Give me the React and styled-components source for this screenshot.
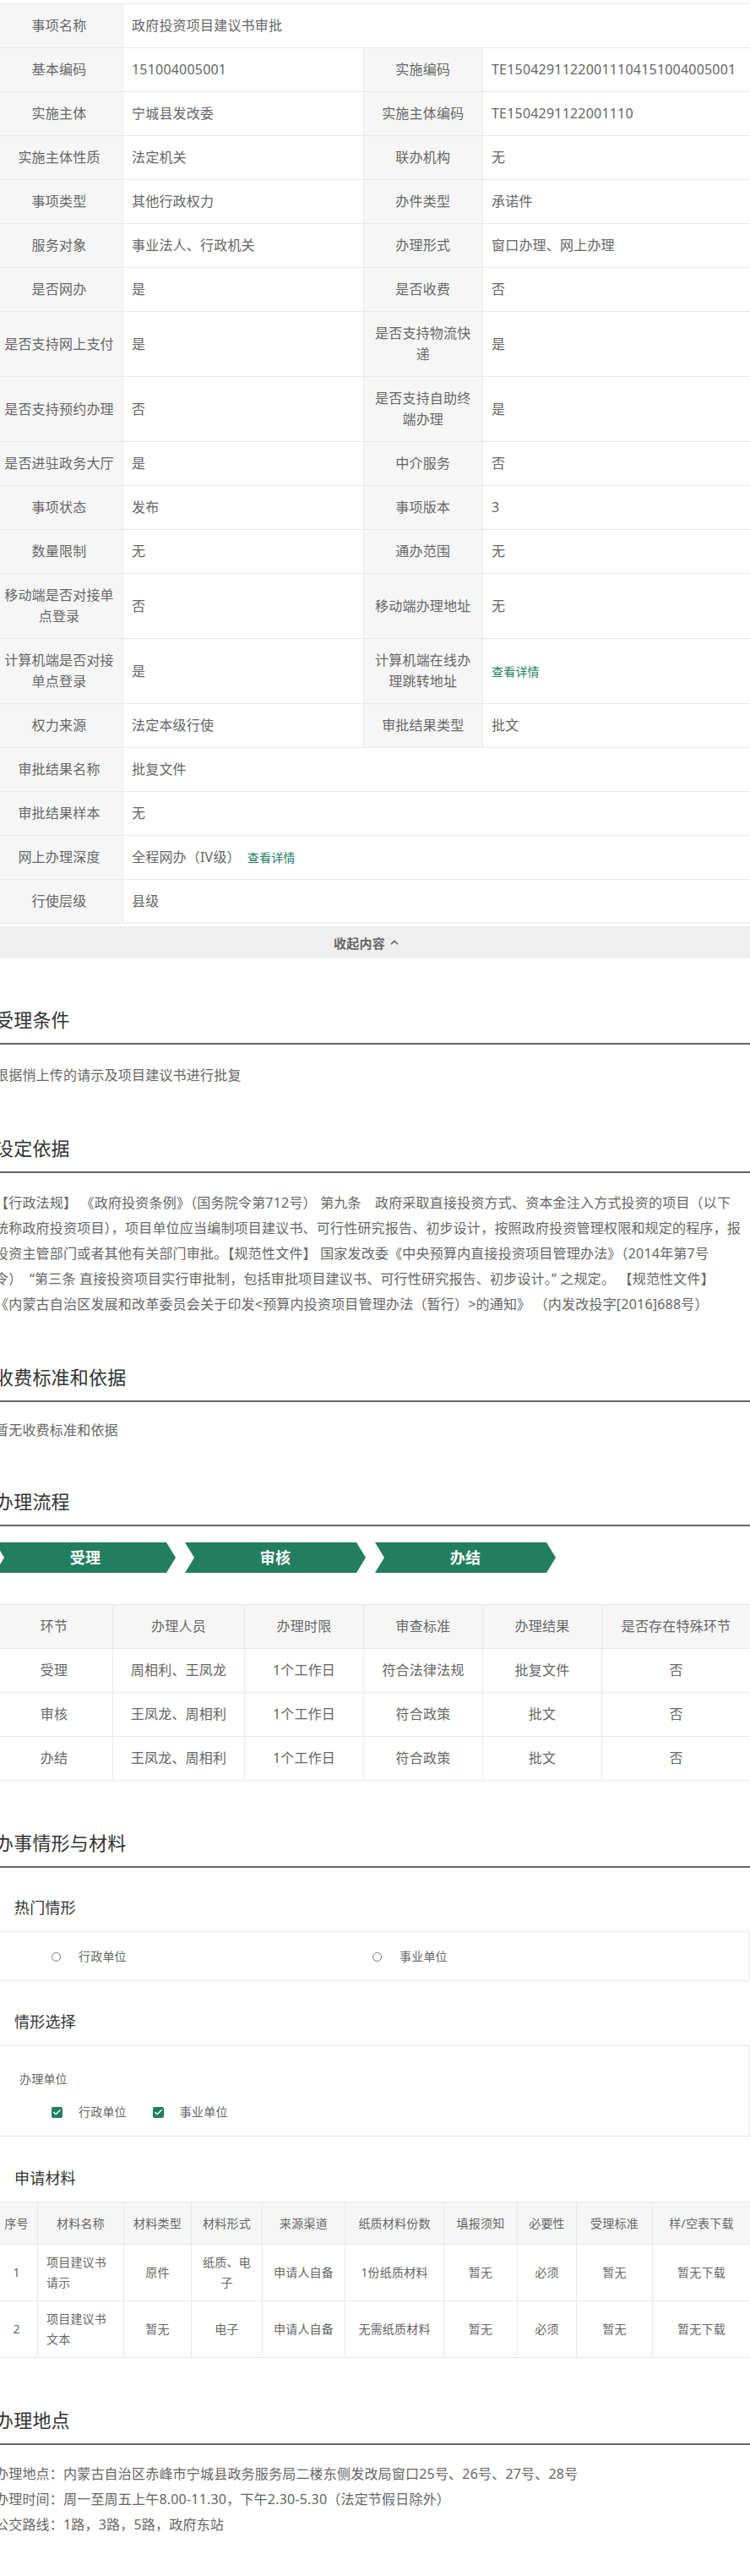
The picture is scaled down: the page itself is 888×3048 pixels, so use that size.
import styled, { createGlobalStyle } from "styled-components";
import { ChevronUp, Check } from "lucide-react";

const GlobalStyle = createGlobalStyle`
  html, body {
    margin: 0;
    padding: 0;
    background: #fff;
    overflow-x: hidden;
  }
  body {
    font-family: "Noto Sans", "Noto Sans CJK SC", sans-serif;
    font-size: 16px;
    letter-spacing: 0.2px;
    color: #666;
  }
`;

const Page = styled.div`
  width: 894px;
  margin-left: -6px;
  padding-top: 4px;
  height: 3044px;
`;

const Table = styled.table`
  width: 100%;
  table-layout: fixed;
  border-collapse: collapse;
  font-size: ${(p) => (p.$small ? "14px" : "16px")};
  line-height: ${(p) => (p.$small ? "24px" : "25px")};
  color: #666;
  margin-top: ${(p) => p.$top || 0}px;
`;

const Col = styled.col`
  width: ${(p) => p.$w}px;
`;

const Label = styled.td`
  border: 1px solid #e9e9e9;
  background: #f6f6f6;
  text-align: center;
  padding: 13px 8px;
`;

const Value = styled.td`
  border: 1px solid #e9e9e9;
  padding: 13px 10px;
`;

const Head = styled.th`
  border: 1px solid #e9e9e9;
  background: #f6f6f6;
  font-weight: 400;
  text-align: center;
  padding: ${(p) => (p.$small ? "12.5px 10px" : "13px 8px")};
`;

const Cell = styled.td`
  border: 1px solid #e9e9e9;
  text-align: ${(p) => (p.$left ? "left" : "center")};
  padding: ${(p) => (p.$small ? "9px 10px" : "13px 8px")};
`;

const DetailLink = styled.a`
  font-size: 14px;
  color: #217e5f;
  margin-left: ${(p) => (p.$gap ? "8px" : "0")};
`;

const Collapse = styled.div`
  height: 38px;
  margin-top: 3px;
  background: #efefef;
  display: flex;
  align-items: center;
  justify-content: center;
  gap: 4px;
  padding-right: 13px;
  font-size: 15px;
  font-weight: 700;
  color: #666;
`;

const SectionTitle = styled.h2`
  margin: ${(p) => p.$top || 56}px 0 0;
  font-size: 22px;
  font-weight: 400;
  line-height: 30px;
  color: #333;
  padding-bottom: 13px;
  border-bottom: 2px solid #666;
`;

const Text = styled.p`
  margin: ${(p) => p.$top || 20}px 0 0;
  line-height: 30px;
  white-space: pre;
  font-size: 16px;
`;

const Steps = styled.div`
  display: flex;
  gap: 11px;
  margin-top: 19px;
`;

const Step = styled.div`
  width: 214px;
  height: 36px;
  background: #217e5f;
  color: #fff;
  font-size: 18px;
  font-weight: 700;
  line-height: 36px;
  text-align: center;
  clip-path: polygon(0 0, 203px 0, 100% 50%, 203px 100%, 0 100%, 11px 50%);
`;

const SubTitle = styled.h3`
  margin: ${(p) => p.$top || 32}px 0 13px;
  padding-left: 23px;
  font-size: 18px;
  font-weight: 400;
  line-height: 30px;
  color: #333;
`;

const OptionBox = styled.div`
  border: 1px solid #e6e6e6;
  border-left: none;
  height: ${(p) => p.$height}px;
  box-sizing: border-box;
  font-size: 14px;
`;

const RadioRow = styled.div`
  display: grid;
  grid-template-columns: 380px 1fr;
  padding: 19px 0 0 67px;
`;

const Option = styled.label`
  display: flex;
  align-items: center;
  line-height: 20px;
  gap: ${(p) => p.$gap}px;
`;

const Radio = styled.span`
  width: 11px;
  height: 11px;
  border: 1px solid #777;
  border-radius: 50%;
  box-sizing: border-box;
`;

const FieldName = styled.div`
  padding: 29px 0 0 29px;
  line-height: 20px;
`;

const CheckRow = styled.div`
  display: flex;
  gap: 31px;
  padding: 19px 0 0 67px;
`;

const CheckBox = styled.span`
  width: 13px;
  height: 13px;
  border-radius: 2px;
  background: #217e5f;
  color: #fff;
  display: flex;
  align-items: center;
  justify-content: center;
`;

const topRows = [
  [["事项名称", "政府投资项目建议书审批"]],
  [["基本编码", "151004005001"], ["实施编码", "TE15042911220011104151004005001"]],
  [["实施主体", "宁城县发改委"], ["实施主体编码", "TE1504291122001110"]],
  [["实施主体性质", "法定机关"], ["联办机构", "无"]],
  [["事项类型", "其他行政权力"], ["办件类型", "承诺件"]],
  [["服务对象", "事业法人、行政机关"], ["办理形式", "窗口办理、网上办理"]],
  [["是否网办", "是"], ["是否收费", "否"]],
  [["是否支持网上支付", "是"], ["是否支持物流快递", "是"]],
  [["是否支持预约办理", "否"], ["是否支持自助终端办理", "是"]],
  [["是否进驻政务大厅", "是"], ["中介服务", "否"]],
  [["事项状态", "发布"], ["事项版本", "3"]],
  [["数量限制", "无"], ["通办范围", "无"]],
  [["移动端是否对接单点登录", "否"], ["移动端办理地址", "无"]],
  [["计算机端是否对接单点登录", "是"], ["计算机端在线办理跳转地址", <DetailLink key="d">查看详情</DetailLink>]],
  [["权力来源", "法定本级行使"], ["审批结果类型", "批文"]],
  [["审批结果名称", "批复文件"]],
  [["审批结果样本", "无"]],
  [["网上办理深度", <span key="w">全程网办（IV级）<DetailLink $gap>查看详情</DetailLink></span>]],
  [["行使层级", "县级"]],
];

const flowHead = ["环节", "办理人员", "办理时限", "审查标准", "办理结果", "是否存在特殊环节"];
const flowRows = [
  ["受理", "周相利、王凤龙", "1个工作日", "符合法律法规", "批复文件", "否"],
  ["审核", "王凤龙、周相利", "1个工作日", "符合政策", "批文", "否"],
  ["办结", "王凤龙、周相利", "1个工作日", "符合政策", "批文", "否"],
];
const flowCols = [139, 156, 141, 141, 141, 176];

const matHead = ["序号", "材料名称", "材料类型", "材料形式", "来源渠道", "纸质材料份数", "填报须知", "必要性", "受理标准", "样/空表下载"];
const matRows = [
  ["1", "项目建议书请示", "原件", "纸质、电子", "申请人自备", "1份纸质材料", "暂无", "必须", "暂无", "暂无下载"],
  ["2", "项目建议书文本", "暂无", "电子", "申请人自备", "无需纸质材料", "暂无", "必须", "暂无", "暂无下载"],
];
const matCols = [50, 102, 80, 84, 98, 117, 87, 70, 90, 116];

const basisText = `【行政法规】 《政府投资条例》（国务院令第712号） 第九条　政府采取直接投资方式、资本金注入方式投资的项目（以下
统称政府投资项目），项目单位应当编制项目建议书、可行性研究报告、初步设计，按照政府投资管理权限和规定的程序，报
投资主管部门或者其他有关部门审批。【规范性文件】 国家发改委《中央预算内直接投资项目管理办法》（2014年第7号
令）  “第三条 直接投资项目实行审批制，包括审批项目建议书、可行性研究报告、初步设计。” 之规定。 【规范性文件】
《内蒙古自治区发展和改革委员会关于印发<预算内投资项目管理办法（暂行）>的通知》 （内发改投字[2016]688号）`;

const placeText = `办理地点：内蒙古自治区赤峰市宁城县政务服务局二楼东侧发改局窗口25号、26号、27号、28号
办理时间：周一至周五上午8.00-11.30，下午2.30-5.30（法定节假日除外）
公交路线：1路，3路，5路，政府东站`;

const Cols = ({ widths }) => (
  <colgroup>
    {widths.map((w, i) => (
      <Col key={i} $w={w} />
    ))}
  </colgroup>
);

export default function App() {
  return (
    <Page>
      <GlobalStyle />
      <Table>
        <Cols widths={[151, 284.5, 141.5, 317]} />
        <tbody>
          {topRows.map((row, i) => (
            <tr key={i}>
              <Label>{row[0][0]}</Label>
              <Value colSpan={row.length === 1 ? 3 : 1}>{row[0][1]}</Value>
              {row[1] && <Label>{row[1][0]}</Label>}
              {row[1] && <Value>{row[1][1]}</Value>}
            </tr>
          ))}
        </tbody>
      </Table>
      <Collapse>
        收起内容 <ChevronUp size={14} strokeWidth={3} />
      </Collapse>

      <SectionTitle $top={57}>受理条件</SectionTitle>
      <Text $top={21}>根据悄上传的请示及项目建议书进行批复</Text>

      <SectionTitle>设定依据</SectionTitle>
      <Text>{basisText}</Text>

      <SectionTitle $top={56}>收费标准和依据</SectionTitle>
      <Text $top={18}>暂无收费标准和依据</Text>

      <SectionTitle $top={54}>办理流程</SectionTitle>
      <Steps>
        <Step>受理</Step>
        <Step>审核</Step>
        <Step>办结</Step>
      </Steps>
      <Table $top={37}>
        <Cols widths={flowCols} />
        <thead>
          <tr>
            {flowHead.map((h) => (
              <Head key={h}>{h}</Head>
            ))}
          </tr>
        </thead>
        <tbody>
          {flowRows.map((row) => (
            <tr key={row[0]}>
              {row.map((c, i) => (
                <Cell key={i}>{c}</Cell>
              ))}
            </tr>
          ))}
        </tbody>
      </Table>

      <SectionTitle $top={58}>办事情形与材料</SectionTitle>
      <SubTitle>热门情形</SubTitle>
      <OptionBox $height={59}>
        <RadioRow>
          <Option $gap={21}>
            <Radio />
            行政单位
          </Option>
          <Option $gap={21}>
            <Radio />
            事业单位
          </Option>
        </RadioRow>
      </OptionBox>

      <SubTitle $top={33}>情形选择</SubTitle>
      <OptionBox $height={108}>
        <FieldName>办理单位</FieldName>
        <CheckRow>
          <Option $gap={19}>
            <CheckBox>
              <Check size={11} strokeWidth={3} />
            </CheckBox>
            行政单位
          </Option>
          <Option $gap={19}>
            <CheckBox>
              <Check size={11} strokeWidth={3} />
            </CheckBox>
            事业单位
          </Option>
        </CheckRow>
      </OptionBox>

      <SubTitle $top={34}>申请材料</SubTitle>
      <Table $small>
        <Cols widths={matCols} />
        <thead>
          <tr>
            {matHead.map((h) => (
              <Head key={h} $small>
                {h}
              </Head>
            ))}
          </tr>
        </thead>
        <tbody>
          {matRows.map((row) => (
            <tr key={row[0]}>
              {row.map((c, i) => (
                <Cell key={i} $small $left={i === 1}>
                  {c}
                </Cell>
              ))}
            </tr>
          ))}
        </tbody>
      </Table>

      <SectionTitle $top={58}>办理地点</SectionTitle>
      <Text $top={19}>{placeText}</Text>
    </Page>
  );
}
